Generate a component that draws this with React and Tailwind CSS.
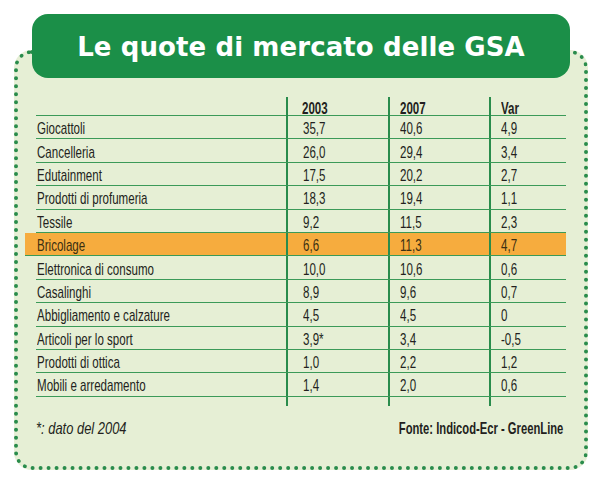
import React from 'react';

const rows = [
    ['Giocattoli', '35,7', '40,6', '4,9'],
    ['Cancelleria', '26,0', '29,4', '3,4'],
    ['Edutainment', '17,5', '20,2', '2,7'],
    ['Prodotti di profumeria', '18,3', '19,4', '1,1'],
    ['Tessile', '9,2', '11,5', '2,3'],
    ['Bricolage', '6,6', '11,3', '4,7'],
    ['Elettronica di consumo', '10,0', '10,6', '0,6'],
    ['Casalinghi', '8,9', '9,6', '0,7'],
    ['Abbigliamento e calzature', '4,5', '4,5', '0'],
    ['Articoli per lo sport', '3,9*', '3,4', '-0,5'],
    ['Prodotti di ottica', '1,0', '2,2', '1,2'],
    ['Mobili e arredamento', '1,4', '2,0', '0,6'],
];

// the source uses a condensed face; squeeze Liberation Sans to match
const Txt = ({ children, className = '' }) => (
    <span className={'inline-block whitespace-nowrap origin-left scale-x-[0.68] ' + className}>{children}</span>
);

const cell = 'border-l-2 border-[#2a8c4c] flex items-center pt-[3px]';

export default function App() {
    return (
        <div
            className="w-[602px] h-[480px] bg-white pt-[14px] px-[14px] text-[#231f20]"
            style={{ fontFamily: '"Liberation Sans", Arial, sans-serif' }}
        >
            {/* title banner */}
            <div className="relative z-10 mx-[18px] h-[64px] rounded-[16px] bg-[#1b8f48] flex items-center justify-center">
                <h1
                    className="text-white text-[26px] font-bold tracking-[0.1px] leading-none pt-[1px]"
                    style={{ fontFamily: '"DejaVu Sans", sans-serif' }}
                >
                    Le quote di mercato delle GSA
                </h1>
            </div>

            {/* dotted box */}
            <div className="-mt-[28px] h-[420px] rounded-[18px] border-4 border-dotted border-[#2a8c4c] bg-[#e6efd5] pt-[43px] px-[18px]">
                <div className="w-[530px] text-[17px] leading-none">
                    <div className="grid grid-cols-[250px_102px_101px_77px] h-[19px] font-bold border-b border-[#3b9a58]">
                        <div></div>
                        <div className={cell + ' pl-[14px]'}><Txt>2003</Txt></div>
                        <div className={cell + ' pl-[10px]'}><Txt>2007</Txt></div>
                        <div className={cell + ' pl-[10px]'}><Txt>Var</Txt></div>
                    </div>
                    {rows.map((r, i) => {
                        const hi = r[0] === 'Bricolage';
                        return (
                            <div
                                key={i}
                                className={
                                    hi
                                        ? 'grid grid-cols-[261px_102px_101px_77px] -ml-[11px] h-[23.4px] border-b border-[#3b9a58] bg-[#f6ac3e] text-[#3a2f12]'
                                        : 'grid grid-cols-[250px_102px_101px_77px] h-[23.4px] border-b border-[#3b9a58]'
                                }
                            >
                                <div className={hi ? 'pl-[12px] flex items-center pt-[3px]' : 'pl-[1px] flex items-center pt-[3px]'}>
                                    <Txt>{r[0]}</Txt>
                                </div>
                                <div className={cell + ' pl-[15px]'}><Txt>{r[1]}</Txt></div>
                                <div className={cell + ' pl-[10px]'}><Txt>{r[2]}</Txt></div>
                                <div className={cell + ' pl-[10px]'}><Txt>{r[3]}</Txt></div>
                            </div>
                        );
                    })}
                    <div className="grid grid-cols-[250px_102px_101px_77px] h-[9px]">
                        <div></div>
                        <div className="border-l-2 border-[#2a8c4c]"></div>
                        <div className="border-l-2 border-[#2a8c4c]"></div>
                        <div className="border-l-2 border-[#2a8c4c]"></div>
                    </div>
                    <div className="flex justify-between items-center mt-[14px] pr-[3px]">
                        <span className="inline-block whitespace-nowrap origin-left scale-x-[0.76] italic">*: dato del 2004</span>
                        <span className="inline-block whitespace-nowrap origin-right scale-x-[0.66] font-bold">
                            Fonte: Indicod-Ecr - GreenLine
                        </span>
                    </div>
                </div>
            </div>
        </div>
    );
}
